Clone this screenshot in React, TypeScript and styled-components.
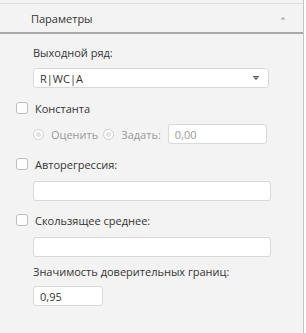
import React from "react";
import styled, { createGlobalStyle } from "styled-components";

const GlobalStyle = createGlobalStyle`
  html, body {
    margin: 0;
    padding: 0;
    background: #ffffff;
  }
  body {
    font-family: "Open Sans", "Noto Sans", Arial, sans-serif;
    font-size: 11px;
    color: #333333;
  }
`;

const Panel = styled.div`
  width: 304px;
  height: 333px;
  padding-top: 3px;
  box-sizing: border-box;
  background: #f3f3f3;
  border-right: 1px solid #c4c4c4;
  display: flex;
  flex-direction: column;
`;

const Header = styled.div`
  height: 28px;
  border-top: 1px solid #dcdcdc;
  border-bottom: 2px solid #a9a9a9;
  display: flex;
  align-items: center;
  justify-content: space-between;
  padding: 0 17px 0 31px;
  color: #333333;
`;

const Body = styled.div`
  display: flex;
  flex-direction: column;
  padding: 11px 0 0 16px;
`;

const Label = styled.div<{ $mt?: number }>`
  height: 16px;
  line-height: 16px;
  margin-left: 17px;
  margin-top: ${(p) => p.$mt ?? 0}px;
`;

const Field = styled.div<{ $w: number; $mt: number; $muted?: boolean }>`
  width: ${(p) => p.$w}px;
  height: 20px;
  box-sizing: border-box;
  margin-top: ${(p) => p.$mt}px;
  margin-left: ${(p) => (p.$muted === undefined ? 17 : 0)}px;
  background: #ffffff;
  border: 1px solid #d9d9d9;
  border-radius: 3px;
  display: flex;
  align-items: center;
  justify-content: space-between;
  padding: 0 9px 0 6px;
  color: ${(p) => (p.$muted ? "#999999" : "#333333")};
`;

const CheckRow = styled.label<{ $mt: number }>`
  display: flex;
  align-items: center;
  gap: 7px;
  height: 16px;
  margin-top: ${(p) => p.$mt}px;
`;

const Box = styled.span`
  width: 12px;
  height: 12px;
  box-sizing: border-box;
  border: 1px solid #bdbdbd;
  border-radius: 3px;
  background: #ffffff;
`;

const RadioRow = styled.div`
  display: flex;
  align-items: center;
  margin: 8px 0 0 17px;
  color: #999999;
`;

const Radio = styled.span<{ $ml?: number }>`
  width: 11px;
  height: 11px;
  box-sizing: border-box;
  border: 1px solid #cfcfcf;
  border-radius: 50%;
  background: #ffffff;
  display: flex;
  align-items: center;
  justify-content: center;
  margin: 0 7px 0 ${(p) => p.$ml ?? 0}px;
  &::after {
    content: "";
    width: 5px;
    height: 5px;
    border-radius: 50%;
    background: #e3e3e3;
  }
`;

const Caret = ({ up }: { up?: boolean }) => (
  <svg width="6" height="4" viewBox="0 0 6 4">
    {up ? (
      <path d="M0.5 3.5 L3 1 L5.5 3.5 Z" fill="#ababab" />
    ) : (
      <>
        <rect x="0" y="0" width="6" height="1" fill="#555" />
        <path d="M0.5 1.5 L5.5 1.5 L3 4 Z" fill="#555" />
      </>
    )}
  </svg>
);

export default function App() {
  return (
    <>
      <GlobalStyle />
      <Panel>
        <Header>
          <span>Параметры</span>
          <Caret up />
        </Header>
        <Body>
          <Label>Выходной ряд:</Label>
          <Field $w={236} $mt={7}>
            <span>R|WC|A</span>
            <Caret />
          </Field>
          <CheckRow $mt={12}>
            <Box />
            <span>Константа</span>
          </CheckRow>
          <RadioRow>
            <Radio />
            <span>Оценить</span>
            <Radio $ml={5} />
            <span>Задать:</span>
            <Field $w={99} $mt={0} $muted style={{ marginLeft: 7 }}>
              <span>0,00</span>
            </Field>
          </RadioRow>
          <CheckRow $mt={12}>
            <Box />
            <span>Авторегрессия:</span>
          </CheckRow>
          <Field $w={238} $mt={9} />
          <CheckRow $mt={11}>
            <Box />
            <span>Скользящее среднее:</span>
          </CheckRow>
          <Field $w={238} $mt={9} />
          <Label $mt={7}>Значимость доверительных границ:</Label>
          <Field $w={70} $mt={6}>
            <span>0,95</span>
          </Field>
        </Body>
      </Panel>
    </>
  );
}
